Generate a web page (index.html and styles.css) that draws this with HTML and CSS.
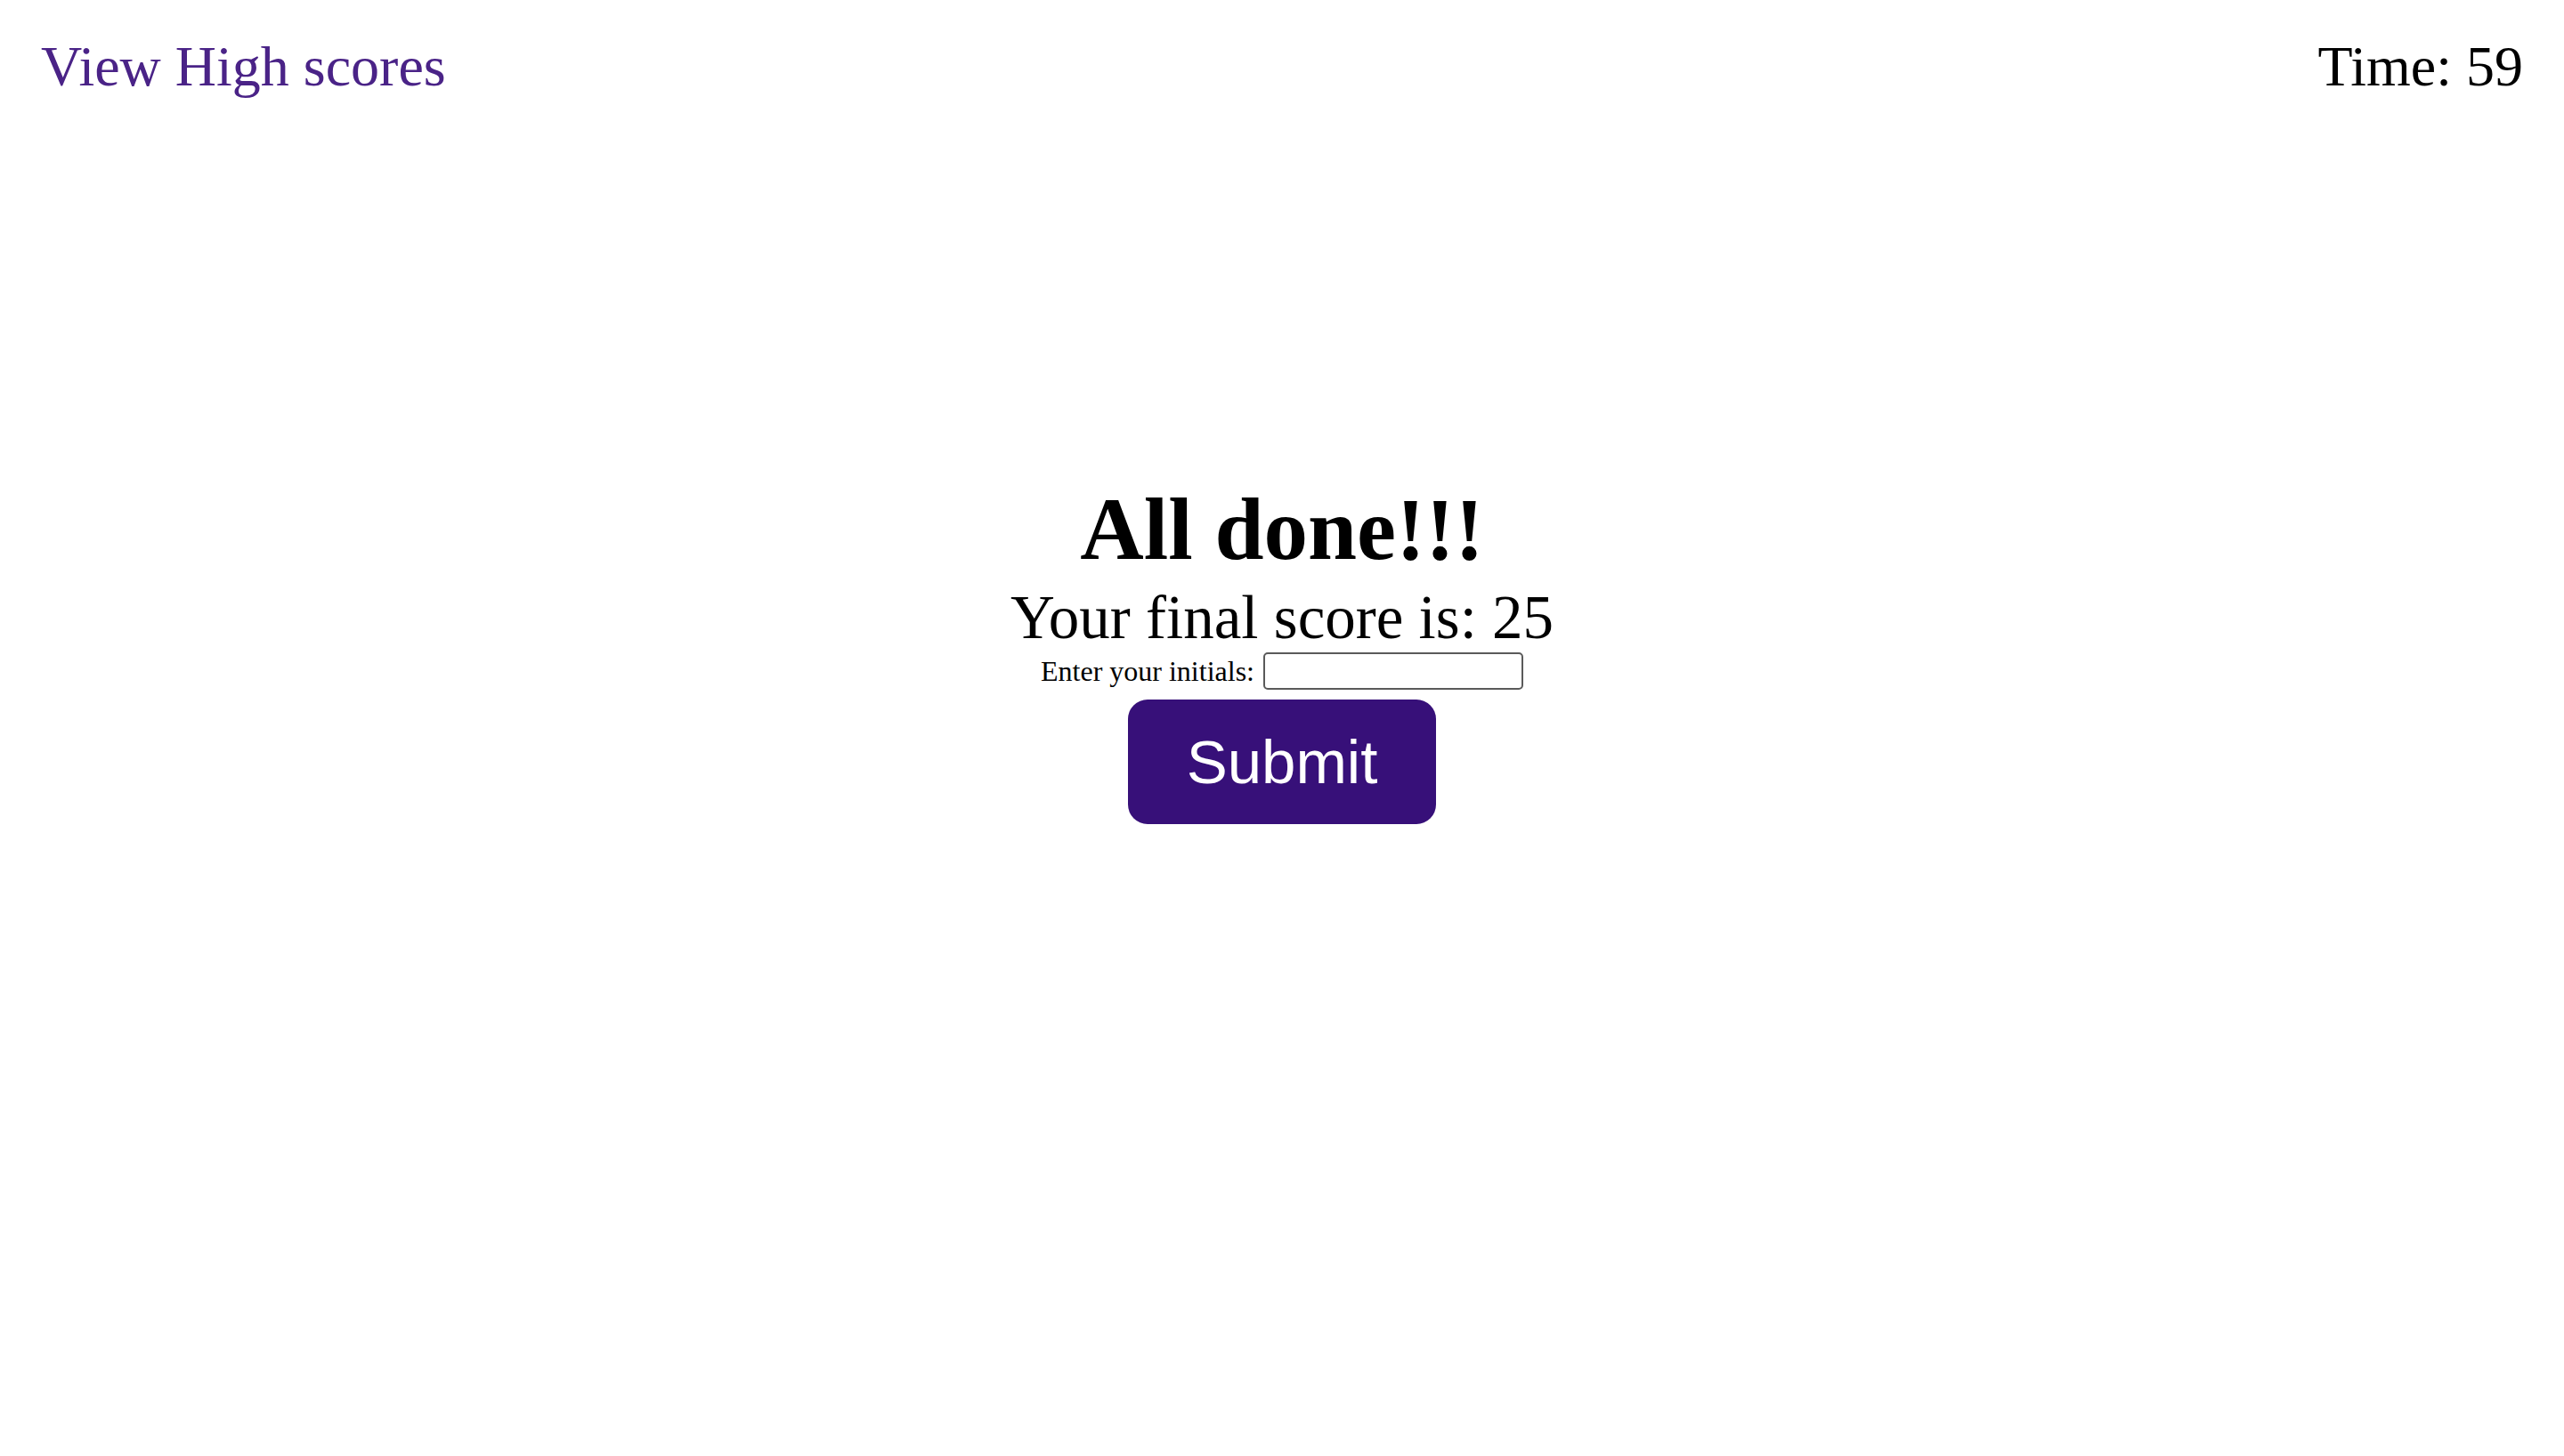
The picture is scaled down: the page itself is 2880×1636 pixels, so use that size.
FILE: index.html
```html
<!DOCTYPE html>
<html lang="en">
<head>
<meta charset="utf-8">
<title>Quiz - All done</title>
<link rel="stylesheet" href="styles.css">
</head>
<body>
<header class="topbar">
  <a class="highscores" href="#">View High scores</a>
  <div class="timer">Time: 59</div>
</header>
<main class="done">
  <h1 class="done-title">All done!!!</h1>
  <p class="final-score">Your final score is: 25</p>
  <div class="entry">
    <label class="entry-label" for="initials">Enter your initials:</label>
    <input class="entry-input" id="initials" type="text">
  </div>
  <button class="submit-btn" type="button">Submit</button>
</main>
</body>
</html>
```

FILE: styles.css
```css
html, body {
  margin: 0;
  padding: 0;
  background: #ffffff;
}

body {
  font-family: "Liberation Serif", "Times New Roman", serif;
  color: #000000;
}

.topbar {
  display: flex;
  justify-content: space-between;
  align-items: flex-start;
  padding: 43px 46px 0 46px;
  font-size: 64px;
  line-height: 64px;
}

.highscores {
  color: #4a2387;
  text-decoration: none;
}

.timer {
  color: #000000;
}

.done {
  display: flex;
  flex-direction: column;
  align-items: center;
  margin-top: 438px;
}

.done-title {
  margin: 0;
  font-size: 99px;
  line-height: 99px;
  font-weight: bold;
}

.final-score {
  margin: 16px 0 0 0;
  font-size: 69px;
  line-height: 69px;
}

.entry {
  display: flex;
  align-items: center;
  gap: 10px;
  margin-top: 4px;
}

.entry-label {
  font-size: 32px;
  line-height: 32px;
}

.entry-input {
  box-sizing: border-box;
  width: 292px;
  height: 42px;
  margin: 0;
  border: 2px solid #5a5a5a;
  border-radius: 5px;
  background: #ffffff;
  padding: 2px 6px;
  font-size: 28px;
}

.submit-btn {
  box-sizing: border-box;
  margin-top: 11px;
  width: 346px;
  height: 140px;
  padding: 0;
  border: none;
  border-radius: 22px;
  background: #371079;
  color: #ffffff;
  font-family: "Liberation Sans", Arial, sans-serif;
  font-size: 69px;
  line-height: 69px;
  cursor: pointer;
}
```
